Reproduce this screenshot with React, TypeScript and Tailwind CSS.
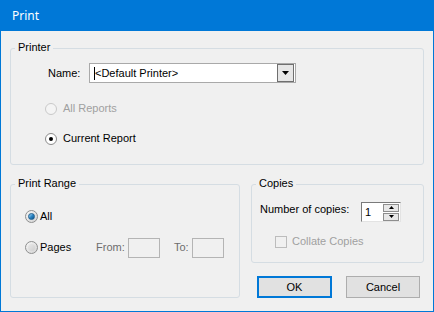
import React from "react";

function GroupBox({
  label,
  className,
  children,
}: {
  label: string;
  className?: string;
  children?: React.ReactNode;
}) {
  return (
    <div className={"relative border border-[#d5dde3] rounded-[3px] " + (className || "")}>
      <span className="absolute left-[4px] top-[-8px] px-[3px] bg-[#f0f0f0] leading-[13px] text-black">
        {label}
      </span>
      {children}
    </div>
  );
}

function ClassicRadio({ checked, disabled }: { checked?: boolean; disabled?: boolean }) {
  return (
    <span
      className={
        "w-[12px] h-[12px] rounded-full border flex items-center justify-center shrink-0 " +
        (disabled ? "border-[#c9c9c9] bg-[#f4f4f4]" : "border-[#8a8a8a] bg-white")
      }
    >
      {checked && <span className="w-[4px] h-[4px] rounded-full bg-black" />}
    </span>
  );
}

function AeroRadio({ checked }: { checked?: boolean }) {
  return (
    <span className="w-[13px] h-[13px] rounded-full border border-[#8e8f8f] bg-gradient-to-br from-[#f7f7f7] to-[#d3d3d3] flex items-center justify-center shrink-0">
      {checked ? (
        <span className="w-[7px] h-[7px] rounded-full bg-gradient-to-br from-[#a6dcf9] via-[#2a86c5] to-[#0d4f86] border border-[#1f5f8f]" />
      ) : (
        <span className="w-[7px] h-[7px] rounded-full bg-gradient-to-br from-[#e9e9e9] to-[#cfcfcf]" />
      )}
    </span>
  );
}

export default function App() {
  return (
    <div className="w-[434px] h-[312px] bg-[#f0f0f0] border border-[#0078d7] flex flex-col font-['Liberation_Sans',Arial,sans-serif] text-[11px] leading-[13px] text-black overflow-hidden">
      <div className="h-[30px] shrink-0 bg-[#0078d7] text-white text-[12px] leading-[16px] font-['Noto_Sans',sans-serif] pl-[11px] flex items-center">
        Print
      </div>
      <div className="px-[9px] pt-[17px] flex flex-col">
        <GroupBox label="Printer" className="h-[117px]">
          <div className="pt-[14px] pl-[37px] flex flex-col">
            <div className="flex items-center">
              <span className="w-[41px]">Name:</span>
              <div className="w-[207px] h-[20px] border border-[#a9a9a9] bg-white flex items-center justify-between">
                <span className="pl-[4px] flex items-center">
                  <span className="w-[1px] h-[13px] bg-black" />
                  <span>&lt;Default Printer&gt;</span>
                </span>
                <span className="w-[17px] h-[18px] mr-[1px] border border-[#6f6f6f] bg-[#e6e6e6] flex items-center justify-center">
                  <svg width="7" height="4" viewBox="0 0 7 4">
                    <path d="M0 0 H7 L3.5 4 Z" fill="#000" />
                  </svg>
                </span>
              </div>
            </div>
            <div className="flex items-center gap-[6px] mt-[19px] ml-[-3px] h-[13px] text-[#a0a0a0]">
              <ClassicRadio disabled />
              <span>All Reports</span>
            </div>
            <div className="flex items-center gap-[6px] mt-[17px] ml-[-3px] h-[13px]">
              <ClassicRadio checked />
              <span>Current Report</span>
            </div>
          </div>
        </GroupBox>

        <div className="flex mt-[19px] gap-[11px]">
          <GroupBox label="Print Range" className="w-[230px] h-[114px]">
            <div className="pt-[25px] pl-[14px] flex flex-col">
              <div className="flex items-center gap-[2px] h-[13px]">
                <AeroRadio checked />
                <span>All</span>
              </div>
              <div className="flex items-center mt-[18px] h-[13px]">
                <div className="flex items-center gap-[2px] w-[71px]">
                  <AeroRadio />
                  <span>Pages</span>
                </div>
                <span className="w-[32px] text-[#6d6d6d]">From:</span>
                <span className="w-[32px] h-[20px] border border-[#b4b4b4] bg-[#f0f0f0]" />
                <span className="ml-[14px] w-[18px] text-[#6d6d6d]">To:</span>
                <span className="w-[32px] h-[20px] border border-[#b4b4b4] bg-[#f0f0f0]" />
              </div>
            </div>
          </GroupBox>

          <div className="flex flex-col">
            <GroupBox label="Copies" className="w-[173px] h-[79px]">
              <div className="pt-[17px] pl-[8px] flex flex-col">
                <div className="flex items-start">
                  <span className="w-[101px] mt-[1px]">Number of copies:</span>
                  <div className="w-[40px] h-[20px] bg-white border-t border-l border-[#7a7a7a] border-r-[#e3e3e3] border-b-[#e3e3e3] border-r border-b flex items-center justify-between">
                    <span className="pl-[3px]">1</span>
                    <div className="flex flex-col mr-[1px] gap-[1px]">
                      <span className="w-[16px] h-[8px] border border-[#8e8e8e] bg-[#e8e8e8] flex items-center justify-center">
                        <svg width="5" height="3" viewBox="0 0 5 3">
                          <path d="M0 3 H5 L2.5 0 Z" fill="#000" />
                        </svg>
                      </span>
                      <span className="w-[16px] h-[8px] border border-[#8e8e8e] bg-[#e8e8e8] flex items-center justify-center">
                        <svg width="5" height="3" viewBox="0 0 5 3">
                          <path d="M0 0 H5 L2.5 3 Z" fill="#000" />
                        </svg>
                      </span>
                    </div>
                  </div>
                </div>
                <div className="flex items-center gap-[5px] mt-[13px] ml-[15px] h-[13px] text-[#a0a0a0]">
                  <span className="w-[12px] h-[12px] border border-[#bcbcbc] bg-[#f0f0f0]" />
                  <span>Collate Copies</span>
                </div>
              </div>
            </GroupBox>
            <div className="flex mt-[13px] pl-[6px] gap-[14px]">
              <button className="w-[75px] h-[22px] border-2 border-[#0078d7] bg-[#e1e1e1] text-black text-[11px] leading-none">
                OK
              </button>
              <button className="w-[74px] h-[22px] border border-[#adadad] bg-[#e1e1e1] text-black text-[11px] leading-none">
                Cancel
              </button>
            </div>
          </div>
        </div>
      </div>
    </div>
  );
}
